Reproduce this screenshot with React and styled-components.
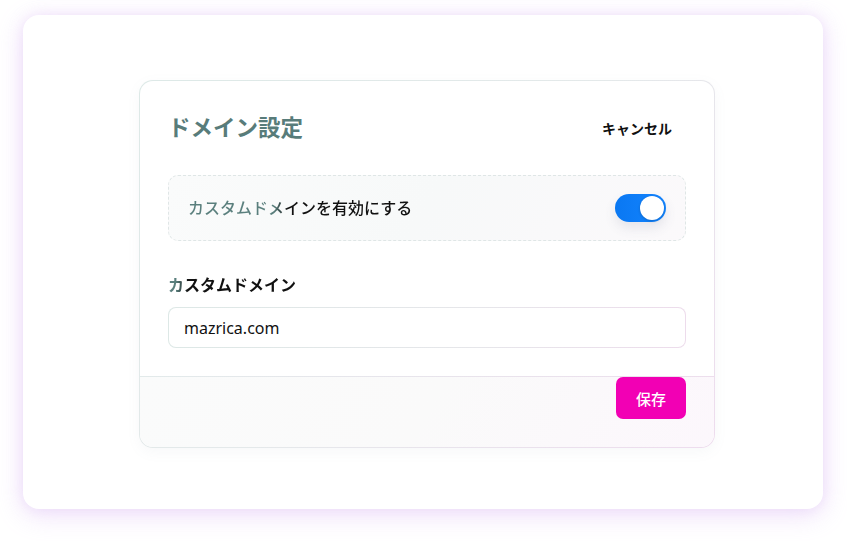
import React, { useState } from 'react';
import styled, { createGlobalStyle } from 'styled-components';

const GlobalStyle = createGlobalStyle`
  html, body {
    margin: 0;
    padding: 0;
    background: #ffffff;
  }
  body {
    font-family: 'Noto Sans', 'Noto Sans CJK JP', sans-serif;
    -webkit-font-smoothing: antialiased;
  }
`;

const Page = styled.div`
  width: 847px;
  height: 541px;
  box-sizing: border-box;
  padding: 15px 24px 32px 23px;
  background: #ffffff;
`;

const Frame = styled.div`
  width: 800px;
  height: 494px;
  box-sizing: border-box;
  padding: 65px 108px 61px 116px;
  background: #ffffff;
  border-radius: 16px;
  box-shadow: 0 6px 26px rgba(205, 160, 240, 0.32), 0 0 14px rgba(225, 200, 245, 0.35);
`;

const Card = styled.div`
  width: 576px;
  height: 368px;
  box-sizing: border-box;
  display: flex;
  flex-direction: column;
  border: 1px solid transparent;
  border-radius: 14px;
  background:
    linear-gradient(#ffffff, #ffffff) padding-box,
    linear-gradient(135deg, #dde9e7 0%, #e4e9ea 50%, #eedcee 100%) border-box;
  box-shadow: 0 4px 14px rgba(120, 140, 150, 0.06);
  overflow: hidden;
`;

const Body = styled.div`
  padding: 30px 28px 28px 28px;
  display: flex;
  flex-direction: column;
`;

const Header = styled.div`
  display: flex;
  align-items: center;
  justify-content: space-between;
  height: 34px;
`;

const Title = styled.h2`
  margin: 0;
  font-size: 22.5px;
  line-height: 32px;
  font-weight: 700;
  color: #587c7a;
`;

const CancelButton = styled.button`
  border: none;
  background: transparent;
  font-family: inherit;
  font-size: 14px;
  font-weight: 700;
  color: #111;
  padding: 6px 14px;
  cursor: pointer;
`;

const ToggleRow = styled.div`
  margin-top: 30px;
  height: 66px;
  box-sizing: border-box;
  border: 1px dashed #dfe6e6;
  border-radius: 10px;
  background: linear-gradient(120deg, #fafbfb 0%, #f7f9f9 50%, #fbf9fb 100%);
  display: flex;
  align-items: center;
  justify-content: space-between;
  padding: 0 19px 0 19px;
`;

const FadeText = styled.span`
  font-size: 16px;
  font-weight: ${p => p.$weight || 500};
  line-height: 22px;
  background: linear-gradient(90deg, #5a7f7d 0px, #5a7f7d ${p => p.$from}px, #111 ${p => p.$to}px, #111 100%);
  -webkit-background-clip: text;
  background-clip: text;
  color: transparent;
`;

const Switch = styled.button`
  position: relative;
  width: 51px;
  height: 28px;
  border: none;
  padding: 0;
  border-radius: 14px;
  background: ${p => (p.$on ? 'linear-gradient(90deg, #0a78f2, #1384ff)' : '#d4d9dd')};
  box-shadow: 0 6px 12px rgba(80, 90, 120, 0.12);
  cursor: pointer;
`;

const Knob = styled.span`
  position: absolute;
  top: 2px;
  left: ${p => (p.$on ? '25px' : '2px')};
  width: 24px;
  height: 24px;
  border-radius: 50%;
  background: #ffffff;
  box-shadow: 0 1px 3px rgba(0, 0, 0, 0.2);
`;

const Field = styled.label`
  margin-top: 33px;
  display: flex;
  flex-direction: column;
  gap: 11px;
`;

const InputWrap = styled.div`
  height: 41px;
  box-sizing: border-box;
  border: 1px solid transparent;
  border-radius: 8px;
  background:
    linear-gradient(#ffffff, #ffffff) padding-box,
    linear-gradient(90deg, #dde8e6 0%, #e6e6ea 60%, #eddcec 100%) border-box;
  display: flex;
  align-items: center;
`;

const Input = styled.input`
  border: none;
  outline: none;
  background: transparent;
  width: 100%;
  padding: 0 15px;
  font-family: 'Noto Sans', 'Noto Sans CJK JP', sans-serif;
  font-size: 16px;
  color: #111;
`;

const Footer = styled.div`
  flex: 1;
  border-top: 1px solid transparent;
  border-image: linear-gradient(90deg, #e2eaea, #eddeed) 1;
  background: linear-gradient(120deg, #fafbfb 0%, #fafafa 50%, #fcf7fc 100%);
  display: flex;
  justify-content: flex-end;
  align-items: flex-start;
  padding: 0 28px;
`;

const SaveButton = styled.button`
  width: 70px;
  height: 42px;
  border: none;
  border-radius: 7px;
  background: #f200b4;
  color: #ffffff;
  font-family: inherit;
  font-size: 15px;
  font-weight: 500;
  cursor: pointer;
`;

export default function App() {
  const [enabled, setEnabled] = useState(true);
  const [domain, setDomain] = useState('mazrica.com');

  return (
    <>
      <GlobalStyle />
      <Page>
        <Frame>
          <Card>
            <Body>
              <Header>
                <Title>ドメイン設定</Title>
                <CancelButton>キャンセル</CancelButton>
              </Header>
              <ToggleRow>
                <FadeText $from={86} $to={100}>カスタムドメインを有効にする</FadeText>
                <Switch $on={enabled} onClick={() => setEnabled(!enabled)}>
                  <Knob $on={enabled} />
                </Switch>
              </ToggleRow>
              <Field>
                <FadeText $weight={700} $from={8} $to={20}>カスタムドメイン</FadeText>
                <InputWrap>
                  <Input value={domain} onChange={e => setDomain(e.target.value)} />
                </InputWrap>
              </Field>
            </Body>
            <Footer>
              <SaveButton>保存</SaveButton>
            </Footer>
          </Card>
        </Frame>
      </Page>
    </>
  );
}
